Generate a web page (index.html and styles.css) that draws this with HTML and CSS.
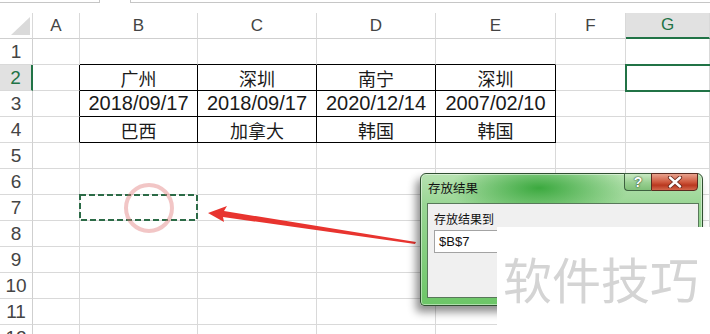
FILE: index.html
```html
<!DOCTYPE html>
<html>
<head>
<meta charset="utf-8">
<link rel="stylesheet" href="styles.css">
</head>
<body>
<div class="screen">
  <div class="topbar"><div class="namebox"></div><div class="fbox"></div></div>
  <div class="sheet">
    <div class="c h corner"><span class="tri"></span></div>
    <div class="c h">A</div><div class="c h">B</div><div class="c h">C</div><div class="c h">D</div><div class="c h">E</div><div class="c h">F</div><div class="c h hsel">G</div>

    <div class="c r">1</div><div class="c"></div><div class="c bt"></div><div class="c bt"></div><div class="c bt"></div><div class="c bt"></div><div class="c"></div><div class="c"></div>

    <div class="c r rsel">2</div><div class="c bl"></div><div class="c bd t">广州</div><div class="c bd t">深圳</div><div class="c bd t">南宁</div><div class="c bd t">深圳</div><div class="c"></div><div class="c active"></div>

    <div class="c r">3</div><div class="c bl"></div><div class="c bd n">2018/09/17</div><div class="c bd n">2018/09/17</div><div class="c bd n">2020/12/14</div><div class="c bd n">2007/02/10</div><div class="c"></div><div class="c"></div>

    <div class="c r">4</div><div class="c bl"></div><div class="c bd t">巴西</div><div class="c bd t">加拿大</div><div class="c bd t">韩国</div><div class="c bd t">韩国</div><div class="c"></div><div class="c"></div>

    <div class="c r">5</div><div class="c"></div><div class="c"></div><div class="c"></div><div class="c"></div><div class="c"></div><div class="c"></div><div class="c"></div>
    <div class="c r">6</div><div class="c"></div><div class="c"></div><div class="c"></div><div class="c"></div><div class="c"></div><div class="c"></div><div class="c"></div>
    <div class="c r">7</div><div class="c"></div><div class="c"></div><div class="c"></div><div class="c"></div><div class="c"></div><div class="c"></div><div class="c"></div>
    <div class="c r">8</div><div class="c"></div><div class="c"></div><div class="c"></div><div class="c"></div><div class="c"></div><div class="c"></div><div class="c"></div>
    <div class="c r">9</div><div class="c"></div><div class="c"></div><div class="c"></div><div class="c"></div><div class="c"></div><div class="c"></div><div class="c"></div>
    <div class="c r">10</div><div class="c"></div><div class="c"></div><div class="c"></div><div class="c"></div><div class="c"></div><div class="c"></div><div class="c"></div>
    <div class="c r">11</div><div class="c"></div><div class="c"></div><div class="c"></div><div class="c"></div><div class="c"></div><div class="c"></div><div class="c"></div>
    <div class="c r">12</div><div class="c"></div><div class="c"></div><div class="c"></div><div class="c"></div><div class="c"></div><div class="c"></div><div class="c"></div>
  </div>

  <svg class="marks" width="710" height="334" viewBox="0 0 710 334">
    <rect x="80" y="195" width="117" height="25" fill="none" stroke="#2c6b47" stroke-width="2" stroke-dasharray="6 3"/>
    <circle cx="149" cy="208" r="23" fill="none" stroke="rgba(225,120,120,0.42)" stroke-width="4"/>
    <polygon points="208,213 227,206 224,211 416,242 415,244 223,217 224,222" fill="#e8342f"/>
  </svg>

  <div class="dlg">
    <div class="dtitle">存放结果</div>
    <div class="dbtns">
      <div class="bhelp">?</div>
      <div class="bclose">
        <svg width="16" height="12" viewBox="0 0 16 12">
          <path d="M3 1.5 L13 10.5 M13 1.5 L3 10.5" stroke="#6b2a1e" stroke-width="4.2" stroke-linecap="round"/>
          <path d="M3 1.5 L13 10.5 M13 1.5 L3 10.5" stroke="#fff" stroke-width="2.4" stroke-linecap="round"/>
        </svg>
      </div>
    </div>
    <div class="dbody">
      <div class="dlabel">存放结果到</div>
      <div class="dinput">$B$7</div>
    </div>
  </div>

  <div class="wm">软件技巧</div>
</div>
</body>
</html>
```

FILE: styles.css
```css
html, body {
  margin: 0;
  padding: 0;
  background: #fff;
}
.screen {
  position: relative;
  width: 710px;
  height: 334px;
  overflow: hidden;
  font-family: "Liberation Sans", Arial, sans-serif;
}
.topbar {
  display: flex;
  height: 13px;
}
.namebox {
  width: 99px;
  height: 2px;
  border-right: 1px solid #c6c6c6;
  border-bottom: 1px solid #c6c6c6;
}
.fbox {
  margin-left: 30px;
  flex: 1;
  height: 2px;
  border-left: 1px solid #c6c6c6;
  border-bottom: 1px solid #c6c6c6;
}
.sheet {
  display: grid;
  grid-template-columns: 33px 47px 118px 119px 119px 120px 70px 84px;
  grid-auto-rows: 26px;
}
.c {
  box-sizing: border-box;
  border-right: 1px solid #d9d9d9;
  border-bottom: 1px solid #d9d9d9;
  display: flex;
  align-items: center;
  justify-content: center;
  color: #111;
  white-space: nowrap;
}
.h {
  font-size: 17px;
  color: #444;
  border-bottom-color: #cfcfcf;
}
.corner {
  position: relative;
}
.tri {
  position: absolute;
  right: 2px;
  bottom: 3px;
  width: 0;
  height: 0;
  border-left: 19px solid transparent;
  border-bottom: 18px solid #dadada;
}
.hsel {
  background: #e1e1e1;
  color: #217346;
  border-bottom: 2px solid #217346;
}
.r {
  font-size: 19px;
  color: #444;
  border-right-color: #cfcfcf;
}
.rsel {
  background: #e1e1e1;
  color: #217346;
  border-right: 2px solid #217346;
}
.bt {
  border-bottom-color: #000;
}
.bl {
  border-right-color: #000;
}
.bd {
  border-right-color: #000;
  border-bottom-color: #000;
}
.t {
  font-family: "Noto Sans CJK SC", sans-serif;
  font-size: 18px;
  color: #1a1a1a;
}
.n {
  font-size: 20px;
  color: #1a1a1a;
}
.active {
  position: relative;
}
.active::after {
  content: "";
  position: absolute;
  left: -1px;
  top: -1px;
  right: -4px;
  bottom: -2px;
  border: 2px solid #217346;
}
.marks {
  position: absolute;
  left: 0;
  top: 0;
}
.dlg {
  position: absolute;
  left: 420px;
  top: 173px;
  width: 283px;
  height: 133px;
  box-sizing: border-box;
  border: 1px solid #2f4f30;
  border-radius: 6px 6px 4px 4px;
  padding: 29px 3px 7px 6px;
  background:
    radial-gradient(ellipse 90px 30px at 118px 14px, rgba(40,160,45,0.85), rgba(40,160,45,0) 100%),
    linear-gradient(#b7e2b1 0px, #9ad695 30px, #6cc667 100%);
  box-shadow: -4px 6px 9px rgba(0,0,0,0.45), inset 0 0 0 1px rgba(255,255,255,0.45);
}
.dtitle {
  position: absolute;
  left: 7px;
  top: 7px;
  font-family: "Noto Sans CJK SC", sans-serif;
  font-size: 12.5px;
  line-height: 14px;
  color: #111;
}
.dbtns {
  position: absolute;
  top: -1px;
  right: 4px;
  display: flex;
}
.bhelp {
  width: 27px;
  height: 18px;
  box-sizing: border-box;
  border: 1px solid #3e6140;
  border-right: none;
  border-radius: 0 0 0 4px;
  background: linear-gradient(#c9e9c3, #98cf90 55%, #7fbf78);
  color: #fff;
  font-weight: bold;
  font-size: 14px;
  line-height: 16px;
  text-align: center;
  text-shadow: 0 0 2px #2c4a2c, 0 0 1px #2c4a2c;
}
.bclose {
  width: 47px;
  height: 18px;
  box-sizing: border-box;
  border: 1px solid #5a2a20;
  border-radius: 0 0 4px 0;
  background: linear-gradient(#e7a18d, #cf5a3f 50%, #b9381f 70%, #d2674c);
  display: flex;
  align-items: center;
  justify-content: center;
}
.dbody {
  height: 100%;
  box-sizing: border-box;
  background: #f0f0f0;
  border: 1px solid #58785a;
  padding: 8px 0 0 6px;
}
.dlabel {
  font-family: "Noto Sans CJK SC", sans-serif;
  font-size: 12px;
  line-height: 14px;
  color: #111;
}
.dinput {
  margin-top: 4px;
  width: 255px;
  height: 23px;
  box-sizing: border-box;
  border: 1px solid #a3a3a3;
  background: #fff;
  font-size: 13px;
  line-height: 21px;
  padding-left: 4px;
  color: #111;
}
.wm {
  position: absolute;
  left: 497px;
  top: 227px;
  width: 213px;
  height: 107px;
  background: #fff;
  box-sizing: border-box;
  padding: 24px 0 0 6px;
  font-family: "Noto Sans CJK SC", sans-serif;
  font-size: 49px;
  line-height: 54px;
  color: #d4d4d4;
  letter-spacing: 0px;
  white-space: nowrap;
}
```
